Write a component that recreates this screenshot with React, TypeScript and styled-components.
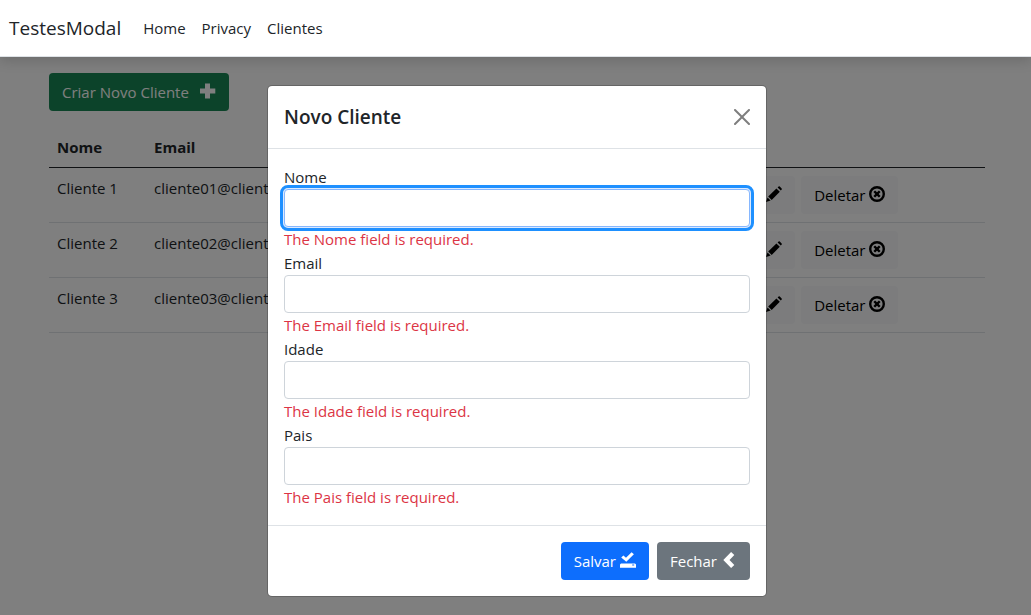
import React from 'react';
import styled, { createGlobalStyle, css } from 'styled-components';

const GlobalStyle = createGlobalStyle`
  *, *::before, *::after { box-sizing: border-box; }
  body {
    margin: 0;
    background: #fff;
    color: #212529;
    font-family: 'Segoe UI', 'Open Sans', sans-serif;
    font-size: 15px;
    line-height: 24px;
  }
`;

const Page = styled.div`
  display: flex;
  flex-direction: column;
  min-height: 100vh;
`;

const Header = styled.header`
  position: relative;
  z-index: 3;
  display: flex;
  align-items: center;
  gap: 14px;
  padding: 8px 9px;
  background: #fff;
  border-bottom: 1px solid #dee2e6;
  box-shadow: 0 4px 12px rgba(0, 0, 0, 0.15);
`;

const Brand = styled.a`
  padding: 5px 0;
  color: #212529;
  font-size: 19px;
  line-height: 30px;
  text-decoration: none;
`;

const Nav = styled.nav`
  display: flex;
`;

const NavLink = styled.a`
  padding: 8px;
  color: #212529;
  text-decoration: none;
`;

const Content = styled.div`
  position: relative;
  flex: 1;
  display: grid;
`;

const Main = styled.main`
  grid-area: 1 / 1;
  padding: 16px 46px 16px 49px;
`;

const variants = {
  success: css`background: #198754; color: #fff;`,
  light: css`background: #f8f9fa; color: #000;`,
  primary: css`background: #0d6efd; color: #fff;`,
  secondary: css`background: #6c757d; color: #fff;`,
};

const Button = styled.button<{ $variant: keyof typeof variants; $gap?: number }>`
  display: inline-flex;
  align-items: center;
  gap: ${({ $gap = 4 }) => $gap}px;
  padding: 7px 13px;
  border: 0;
  border-radius: 4px;
  font: inherit;
  white-space: nowrap;
  cursor: pointer;
  ${({ $variant }) => variants[$variant]}

  svg {
    margin-bottom: 2px;
  }
`;

const Table = styled.table`
  width: 100%;
  margin-top: 16px;
  table-layout: fixed;
  border-collapse: separate;
  border-spacing: 0;
`;

const HeadCell = styled.th<{ $width?: number }>`
  width: ${({ $width }) => ($width ? `${$width}px` : 'auto')};
  padding: 8px;
  border-bottom: 1px solid #212529;
  text-align: left;
  font-weight: 700;
`;

const Cell = styled.td`
  padding: 8px;
  border-bottom: 1px solid #dee2e6;
  vertical-align: top;
`;

const Actions = styled.div`
  display: flex;
  gap: 6px;
`;

const Backdrop = styled.div`
  position: relative;
  z-index: 2;
  grid-area: 1 / 1;
  display: flex;
  justify-content: center;
  align-items: flex-start;
  padding: 28px 0 16px 3px;
  background: rgba(0, 0, 0, 0.5);
`;

const Dialog = styled.section`
  width: 100%;
  max-width: 500px;
  background: #fff;
  background-clip: padding-box;
  border: 1px solid rgba(0, 0, 0, 0.2);
  border-radius: 5px;
`;

const DialogHeader = styled.div`
  display: flex;
  align-items: center;
  justify-content: space-between;
  padding: 16px;
  border-bottom: 1px solid #dee2e6;
`;

const DialogTitle = styled.h5`
  margin: 0;
  font-size: 19px;
  font-weight: 600;
  line-height: 30px;
`;

const CloseButton = styled.button`
  display: flex;
  padding: 0;
  border: 0;
  background: none;
  color: #000;
  opacity: 0.5;
  cursor: pointer;
`;

const DialogBody = styled.div`
  padding: 16px;
`;

const Label = styled.label`
  display: block;
`;

const TextInput = styled.input`
  display: block;
  width: 100%;
  height: 38px;
  padding: 6px 12px;
  border: 1px solid #ced4da;
  border-radius: 4px;
  background: #fff;
  color: #212529;
  font: inherit;

  &:focus {
    border-color: #86b7fe;
    outline: 3px solid #1e90ff;
    outline-offset: 1px;
    box-shadow: 0 0 0 1px #dbe9ff;
  }
`;

const ErrorText = styled.span`
  display: block;
  color: #dc3545;
`;

const DialogFooter = styled.div`
  display: flex;
  justify-content: flex-end;
  gap: 8px;
  padding: 16px;
  border-top: 1px solid #dee2e6;
`;

const Icon = ({ d }: { d: string }) => (
  <svg width="16" height="16" viewBox="0 0 16 16" fill="currentColor" fillRule="evenodd" aria-hidden="true">
    <path d={d} />
  </svg>
);

const icons = {
  plus: 'M5 0.5h5v5h5.3v5h-5.3v5h-5v-5h-5v-5h5z',
  pencil:
    'M12.6 0.5Q13.2 0 13.8 0.6L15.6 2.4Q16.2 3 15.7 3.6L14.8 4.6L11.6 1.4ZM10.4 2.4L13.8 5.8L5.7 13.9L2.2 10.4ZM1.5 11.4L4.6 14.5L0 16Z',
  removeCircle:
    'M8 0a8 8 0 1 1 0 16a8 8 0 1 1 0-16zM8 2.4a5.6 5.6 0 1 0 0 11.2a5.6 5.6 0 1 0 0-11.2zM6.1 4.4L8 6.3L9.9 4.4L11.6 6.1L9.7 8L11.6 9.9L9.9 11.6L8 9.7L6.1 11.6L4.4 9.9L6.3 8L4.4 6.1Z',
  saved: 'M1.2 5.6L3.4 3.4L6 5.7L11.6 0.2L13.9 2.2L6.3 9.7ZM1 11.5H15L16 12.5V15.7H0V12.5ZM12.2 12.6V13.4H14.2V12.6Z',
  chevronLeft: 'M10.1 0L13.3 3.1L8.5 8L13.3 12.9L10.1 16L2.3 8Z',
  close:
    'M.293.293a1 1 0 011.414 0L8 6.586 14.293.293a1 1 0 111.414 1.414L9.414 8l6.293 6.293a1 1 0 01-1.414 1.414L8 9.414l-6.293 6.293a1 1 0 01-1.414-1.414L6.586 8 .293 1.707a1 1 0 010-1.414z',
};

const clients = [1, 2, 3].map((n) => ({
  name: `Cliente ${n}`,
  email: `cliente0${n}@cliente.com`,
}));

const fields = ['Nome', 'Email', 'Idade', 'Pais'];

export default function App() {
  return (
    <>
      <GlobalStyle />
      <Page>
        <Header>
          <Brand href="#">TestesModal</Brand>
          <Nav>
            <NavLink href="#">Home</NavLink>
            <NavLink href="#">Privacy</NavLink>
            <NavLink href="#">Clientes</NavLink>
          </Nav>
        </Header>
        <Content>
          <Main>
            <Button type="button" $variant="success" $gap={11}>
              Criar Novo Cliente <Icon d={icons.plus} />
            </Button>
            <Table>
              <thead>
                <tr>
                  <HeadCell $width={97}>Nome</HeadCell>
                  <HeadCell>Email</HeadCell>
                  <HeadCell $width={285} aria-label="Ações" />
                </tr>
              </thead>
              <tbody>
                {clients.map((client) => (
                  <tr key={client.name}>
                    <Cell>{client.name}</Cell>
                    <Cell>{client.email}</Cell>
                    <Cell>
                      <Actions>
                        <Button type="button" $variant="light">
                          Editar <Icon d={icons.pencil} />
                        </Button>
                        <Button type="button" $variant="light">
                          Deletar <Icon d={icons.removeCircle} />
                        </Button>
                      </Actions>
                    </Cell>
                  </tr>
                ))}
              </tbody>
            </Table>
          </Main>
          <Backdrop>
            <Dialog role="dialog" aria-modal="true" aria-labelledby="dialog-title">
              <DialogHeader>
                <DialogTitle id="dialog-title">Novo Cliente</DialogTitle>
                <CloseButton type="button" aria-label="Fechar">
                  <Icon d={icons.close} />
                </CloseButton>
              </DialogHeader>
              <DialogBody>
                {fields.map((field, index) => (
                  <div key={field}>
                    <Label htmlFor={field}>{field}</Label>
                    <TextInput id={field} type="text" autoFocus={index === 0} />
                    <ErrorText>The {field} field is required.</ErrorText>
                  </div>
                ))}
              </DialogBody>
              <DialogFooter>
                <Button type="button" $variant="primary">
                  Salvar <Icon d={icons.saved} />
                </Button>
                <Button type="button" $variant="secondary">
                  Fechar <Icon d={icons.chevronLeft} />
                </Button>
              </DialogFooter>
            </Dialog>
          </Backdrop>
        </Content>
      </Page>
    </>
  );
}
